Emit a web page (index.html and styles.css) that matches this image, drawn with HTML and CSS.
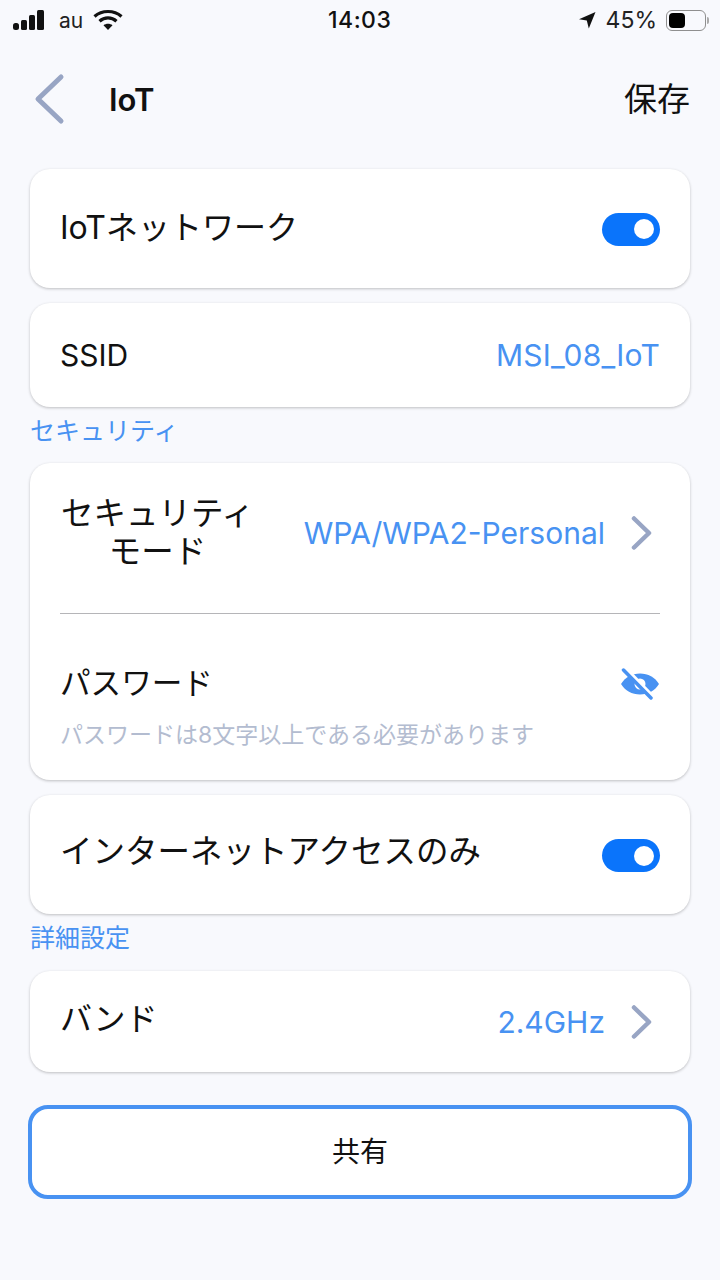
FILE: index.html
```html
<!DOCTYPE html>
<html lang="ja">
<head>
  <meta charset="UTF-8">
  <meta name="viewport" content="width=device-width, initial-scale=1.0">
  <title>IoT</title>
  <link rel="stylesheet" href="styles.css">
</head>
<body>
  <div class="status">
    <div class="status-left">
      <svg class="signal" width="34" height="20" viewBox="0 0 34 20"><rect x="1" y="13" width="6" height="7" rx="2.500" /><rect x="9" y="10" width="6" height="10" rx="1.500" /><rect x="17" y="5" width="6" height="15" rx="1.500" /><rect x="25" y="0" width="7" height="20" rx="1.500" /></svg>
      <span class="carrier">au</span>
      <svg class="wifi" width="30" height="22" viewBox="0 0 30 22"><path d="M1.500 7.500C9 .8 21 .8 28.500 7.500" /><path d="M6.500 12.200C11.500 7.800 18.500 7.800 23.500 12.200" /><path class="wifi-dot" d="M10.500 16.300C13 14.300 17 14.300 19.500 16.300L15 21Z" /></svg>
    </div>
    <div class="status-time">14:03</div>
    <div class="status-right">
      <svg width="18" height="18" viewBox="0 0 18 18"><path d="M17.500 1L1 8.200L8.800 9.500L10.800 17.500Z" /></svg>
      <span class="percent">45%</span>
      <div class="battery"><div class="battery-fill"></div></div>
      <div class="battery-cap"></div>
    </div>
  </div>

  <div class="nav">
    <div class="nav-left">
      <svg class="back" width="34" height="52" viewBox="0 0 34 52"><path d="M29 4L6 26L29 48" /></svg>
      <span class="nav-title">IoT</span>
    </div>
    <span class="nav-save">保存</span>
  </div>

  <div class="content">
    <div class="card card-network">
      <span class="row-label">IoTネットワーク</span>
      <div class="toggle"><div class="knob"></div></div>
    </div>

    <div class="card card-ssid">
      <span class="row-label ssid-label">SSID</span>
      <span class="value ssid-value">MSI_08_IoT</span>
    </div>

    <div class="section-label section-security">セキュリティ</div>

    <div class="card-block">
      <div class="mode-row">
        <span class="row-label mode-label">セキュリティ<br>モード</span>
        <div class="row-right">
          <span class="value">WPA/WPA2-Personal</span>
          <svg class="chevron" width="22" height="34" viewBox="0 0 22 34"><path d="M3 2.500L18 17L3 31.500" /></svg>
        </div>
      </div>
      <div class="divider"></div>
      <div class="password-row">
        <span class="row-label password-label">パスワード</span>
        <svg class="eye" width="40" height="32" viewBox="0 0 40 32"><path d="M1 16C5 9.500 12 5.500 20 5.500C28 5.500 35 9.500 39 16C35 22.500 28 26.500 20 26.500C12 26.500 5 22.500 1 16Z" /><circle class="eye-pupil" cx="20" cy="16" r="5.500" /><path class="eye-gap" d="M6 1L34 30" /><path class="eye-slash" d="M3.500 2L31 30" /></svg>
      </div>
      <div class="hint">パスワードは8文字以上である必要があります</div>
    </div>

    <div class="card card-internet">
      <span class="row-label internet-label">インターネットアクセスのみ</span>
      <div class="toggle"><div class="knob"></div></div>
    </div>

    <div class="section-label section-advanced">詳細設定</div>

    <div class="card card-band">
      <span class="row-label">バンド</span>
      <div class="row-right">
        <span class="value">2.4GHz</span>
        <svg class="chevron" width="22" height="34" viewBox="0 0 22 34"><path d="M3 2.500L18 17L3 31.500" /></svg>
      </div>
    </div>

    <button class="share">共有</button>
  </div>
</body>
</html>
```

FILE: styles.css
```css
body {
  margin: 0;
  height: 1280px;
  overflow: hidden;
  background-color: #f8f9fd;
  color: #111;
  font-family: "Inter", "Noto Sans CJK JP", sans-serif;
}

/* status bar */
.status {
  height: 40px;
  display: flex;
  align-items: center;
  justify-content: space-between;
  padding: 0 11px 0 12px;
  position: relative;
}
.status-left, .status-right {
  display: flex;
  align-items: center;
}
.signal { fill: #111; }
.carrier {
  font-size: 21px;
  margin-left: 13px;
  color: #222;
}
.wifi {
  margin-left: 10px;
  fill: none;
  stroke: #111;
  stroke-width: 3.200;
}
.wifi-dot {
  fill: #111;
  stroke: none;
}
.status-time {
  position: absolute;
  left: 328px;
  top: 6px;
  font-size: 23px;
  font-weight: 500;
  letter-spacing: 0.5px;
}
.status-right svg { fill: #111; }
.percent {
  font-size: 23px;
  margin-left: 10px;
  color: #222;
}
.battery {
  width: 40px;
  height: 21px;
  margin-left: 9px;
  border: 1.500px solid #8f8f8f;
  border-radius: 6px;
  padding: 2px;
  box-sizing: border-box;
  display: flex;
}
.battery-fill {
  width: 16px;
  background: #000;
  border-radius: 4px;
}
.battery-cap {
  width: 2px;
  height: 7px;
  margin-left: 1px;
  background: #aaa;
  border-radius: 0 2px 2px 0;
}

/* nav */
.nav {
  height: 118px;
  display: flex;
  align-items: center;
  justify-content: space-between;
  padding: 0 30px 0 32px;
  box-sizing: border-box;
}
.nav-left {
  display: flex;
  align-items: center;
}
.back {
  fill: none;
  stroke: #98a5c4;
  stroke-width: 5;
  stroke-linecap: round;
  stroke-linejoin: round;
}
.nav-title {
  font-size: 31px;
  font-weight: 600;
  margin-left: 43px;
}
.nav-save {
  font-size: 33px;
  line-height: 44px;
  margin-top: -1px;
}

/* cards */
.content {
  margin-top: 11px;
  padding: 0 30px;
}
.card, .card-block {
  background: #fff;
  border-radius: 20px;
  box-shadow: 0 1px 3px rgba(0,0,0,0.24);
  margin-bottom: 15px;
}
.card {
  display: flex;
  align-items: center;
  justify-content: space-between;
  padding: 0 30px;
}
.card-network { height: 119px; }
.card-ssid { height: 104px; margin-bottom: 0; }
.card-internet { height: 119px; margin-bottom: 0; }
.card-band { height: 101px; margin-bottom: 0; }
.card-network .row-label { margin-top: -2px; }
.card-internet .row-label { margin-top: -5px; }
.card-internet .toggle { margin-top: 2px; }
.card-band .row-label { margin-top: -5px; }
.card-network .toggle { margin-top: 1px; }
.row-label { font-size: 32px; line-height: 44px; }
.ssid-label { font-size: 30px; }
.password-label { font-size: 30.600px; margin-top: -2px; }
.internet-label { font-size: 32.500px; }
.value {
  font-size: 30px;
  color: #4892f2;
}
.ssid-value { letter-spacing: 0.2px; }
.row-right {
  display: flex;
  align-items: center;
}
.chevron {
  margin-left: 26px;
  margin-right: 7px;
  fill: none;
  stroke: #98a5c4;
  stroke-width: 4.500;
  stroke-linecap: round;
  stroke-linejoin: round;
}
.toggle {
  width: 58px;
  height: 33px;
  border-radius: 17px;
  background: #0a74fb;
  display: flex;
  align-items: center;
  justify-content: flex-end;
  padding-right: 6px;
  box-sizing: border-box;
}
.knob {
  width: 20px;
  height: 20px;
  border-radius: 50%;
  background: #fff;
}
.section-label {
  font-size: 25px;
  line-height: 32px;
  color: #4892f2;
}
.section-security { margin: 8px 0 16px; }
.section-advanced { margin: 8px 0 17px; }

/* security block */
.card-block {
  height: 317px;
  padding: 0 30px;
  box-sizing: border-box;
}
.mode-row {
  height: 150px;
  padding-bottom: 10px;
  box-sizing: border-box;
  display: flex;
  align-items: center;
  justify-content: space-between;
}
.mode-label {
  font-size: 32.500px;
  text-align: center;
  line-height: 38px;
  margin-left: 1px;
}
.divider {
  height: 1px;
  background: #b5b5b8;
}
.password-row {
  display: flex;
  align-items: center;
  justify-content: space-between;
  height: 66px;
  margin-top: 37px;
}
.eye path:first-child { fill: #4892f2; }
.eye-pupil { fill: #fff; }
.eye-gap {
  stroke: #fff;
  stroke-width: 4;
}
.eye-slash {
  stroke: #4892f2;
  stroke-width: 3.500;
  stroke-linecap: round;
}
.hint {
  font-size: 23px;
  line-height: 30px;
  color: #b3bcd0;
  margin-top: 3px;
}

/* share button */
.share {
  display: block;
  width: calc(100% + 4px);
  height: 94px;
  margin: 33px 0 0 -2px;
  padding: 0 0 4px;
  background: #fff;
  border: 4px solid #4892f2;
  border-radius: 20px;
  color: #111;
  font-family: inherit;
  font-size: 28px;
}
```
